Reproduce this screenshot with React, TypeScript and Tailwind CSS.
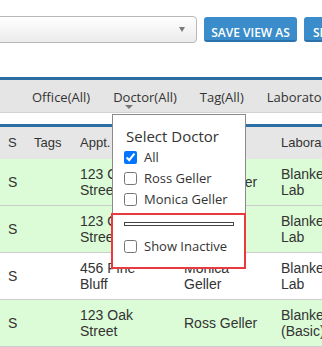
import React from 'react'

const rows = [
  { s: 'S', appt: ['123 Oak', 'Street'], doctor: 'Ross Geller', lab: 'Blanket Lab', green: true },
  { s: 'S', appt: ['123 Oak', 'Street'], doctor: 'Monica Geller', lab: 'Blanket Lab', green: true },
  { s: 'S', appt: ['456 Pine', 'Bluff'], doctor: 'Monica Geller', lab: 'Blanket Lab', green: false },
  { s: 'S', appt: ['123 Oak', 'Street'], doctor: 'Ross Geller', lab: 'Blanket (Basic)', green: true },
]

const cols = 'grid grid-cols-[26px_46px_104px_97px_80px]'

export default function App() {
  return (
    <div className="relative h-[347px] w-[322px] overflow-hidden bg-white text-[#333]">
      {/* toolbar */}
      <div className="flex h-[77px] items-start gap-[7px] pt-[16px] font-['Open_Sans',sans-serif]">
        <div className="-ml-[63px] flex h-[27px] w-[260px] shrink-0 items-center justify-end rounded-[4px] border border-[#b8b8b8] bg-gradient-to-b from-white to-[#ebebeb] pr-[11px]">
          <span className="h-0 w-0 border-x-[3px] border-t-[5px] border-x-transparent border-t-[#7a7a7a]" />
        </div>
        <button className="mt-[1px] h-[25px] w-[93px] shrink-0 rounded-[3px] border-b-2 border-[#2c72aa] bg-[#3a8dca] pt-[9px] text-[12px] font-semibold leading-[14px] text-white">
          SAVE VIEW AS
        </button>
        <button className="mt-[1px] h-[25px] w-[80px] shrink-0 rounded-[3px] border-b-2 border-[#2c72aa] bg-[#3a8dca] pl-[9px] pt-[9px] text-left text-[12px] font-semibold leading-[14px] text-white">
          SELECT
        </button>
      </div>
      <div className="h-[3px] bg-[#2b6ea4]" />

      {/* filter bar */}
      <div className="flex h-[33px] items-center gap-[23px] whitespace-nowrap border-b border-[#d2d2d2] bg-[#e5e5e5] pl-[32px] pt-[3px] font-['Open_Sans',sans-serif] text-[13px]">
        <span>Office(All)</span>
        <span>Doctor(All)</span>
        <span>Tag(All)</span>
        <span>Laboratory(All)</span>
      </div>
      <div className="h-[11px]" />
      <div className="h-[3px] bg-[#2b6ea4]" />

      {/* table */}
      <div className="font-['Liberation_Sans',Arial,sans-serif]">
        <div className={`${cols} h-[32px] items-center bg-[#e6e6e6] text-[13px]`}>
          <span className="px-[8px]">S</span>
          <span className="px-[8px]">Tags</span>
          <span className="px-[8px]">Appt.</span>
          <span className="px-[8px]">Doctor</span>
          <span className="whitespace-nowrap px-[8px]">Laboratory</span>
        </div>
        {rows.map((r, i) => (
          <div
            key={i}
            className={`${cols} h-[47px] items-center border-b border-[#cdcdcd] text-[14px] leading-[16px] ${r.green ? 'bg-[#dcfcd7]' : 'bg-white'}`}
          >
            <span className="px-[8px]">{r.s}</span>
            <span className="px-[8px]" />
            <span className="px-[8px]">
              {r.appt[0]}
              <br />
              {r.appt[1]}
            </span>
            <span className="px-[8px]">{r.doctor}</span>
            <span className="px-[8px]">{r.lab}</span>
          </div>
        ))}
      </div>

      {/* caret under Doctor filter */}
      <span className="absolute left-[125px] top-[105px] h-0 w-0 border-x-[4px] border-t-[4px] border-x-transparent border-t-[#777]" />

      {/* doctor dropdown */}
      <div className="absolute left-[112px] top-[114px] h-[154px] w-[134px] border border-[#8a8a8a] bg-white pl-[11px] pt-[11px] font-['Open_Sans',sans-serif] text-[#333]">
        <p className="ml-[2px] text-[15px] leading-[21px]">Select Doctor</p>
        <Option label="All" checked />
        <Option label="Ross Geller" />
        <Option label="Monica Geller" />
        <div className="mt-[12px] h-[4px] w-[110px] border border-[#444]" />
        <div className="mt-[10px]">
          <Option label="Show Inactive" />
        </div>
      </div>
      <div className="absolute left-[111px] top-[213px] h-[56px] w-[135px] border-2 border-[#e83a3f]" />
    </div>
  )
}

function Option({ label, checked = false }: { label: string; checked?: boolean }) {
  return (
    <label className="flex h-[21px] items-center gap-[7px] whitespace-nowrap text-[13px]">
      <input type="checkbox" defaultChecked={checked} className="m-0 h-[13px] w-[13px]" />
      <span>{label}</span>
    </label>
  )
}
